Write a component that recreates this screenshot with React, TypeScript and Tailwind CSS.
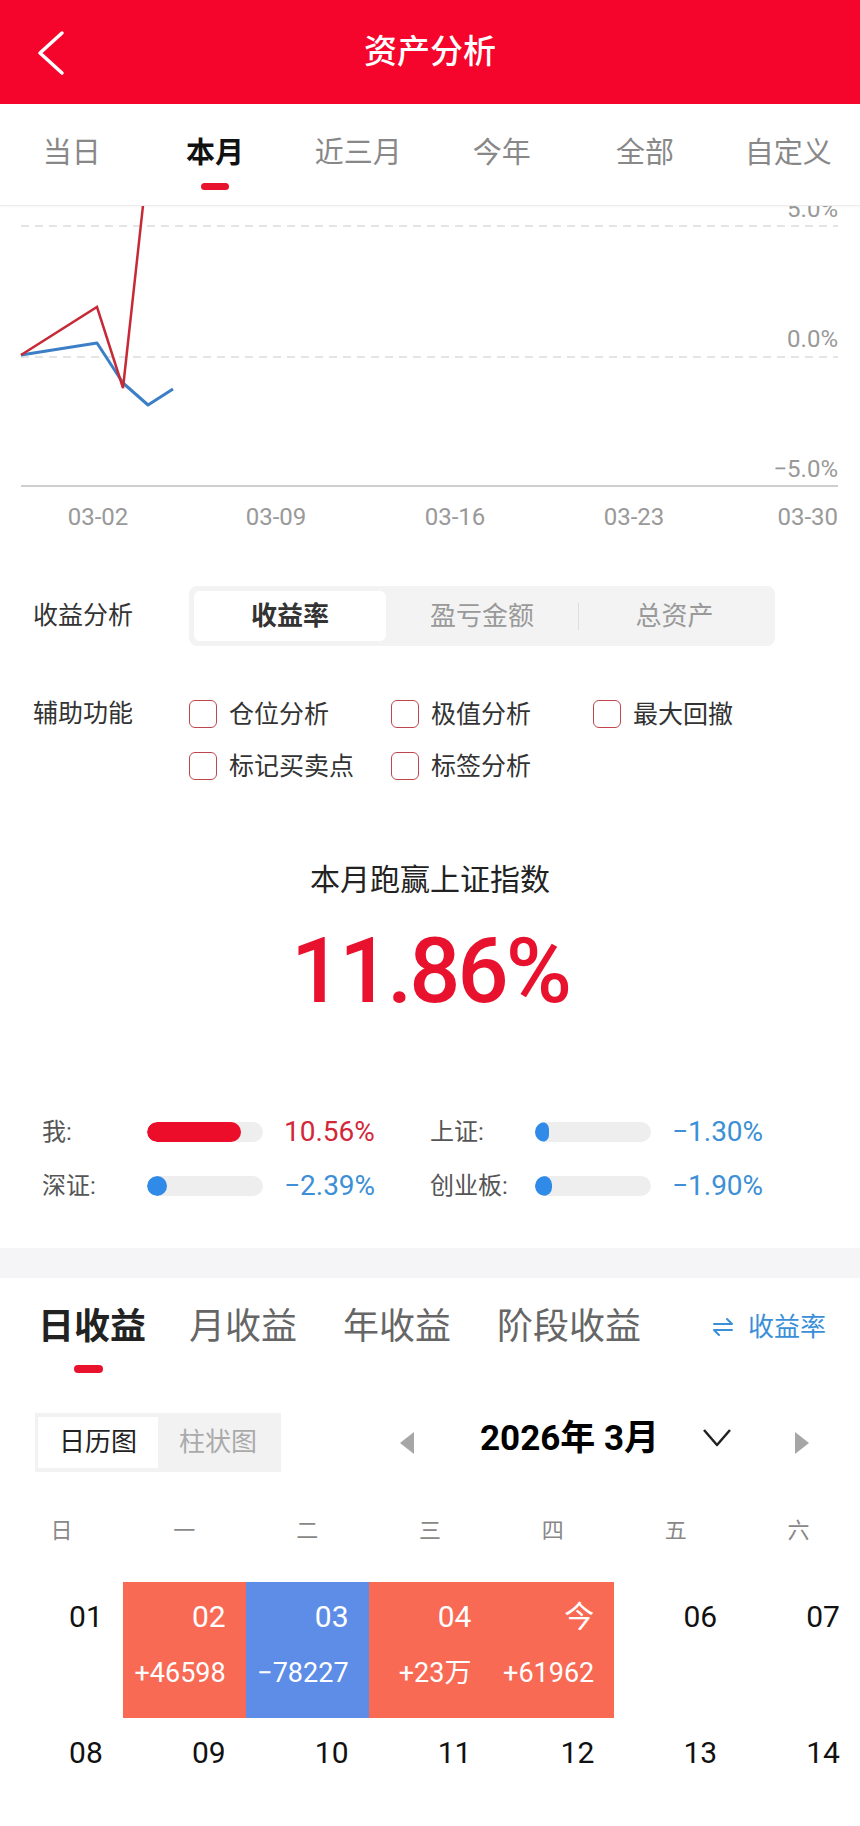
const tabs = ["当日", "本月", "近三月", "今年", "全部", "自定义"];
const weekdays = ["日", "一", "二", "三", "四", "五", "六"];

const Chart = () => {
  return (
    <svg width="860" height="334" viewBox="0 0 860 334" className="block overflow-hidden">
      <line x1="21" y1="20" x2="838" y2="20" stroke="#dcdcdc" strokeWidth="1.5" strokeDasharray="8 6" />
      <line x1="21" y1="151" x2="838" y2="151" stroke="#dcdcdc" strokeWidth="1.5" strokeDasharray="8 6" />
      <line x1="21" y1="280" x2="838" y2="280" stroke="#cfcfcf" strokeWidth="2" />
      <g fill="#999" fontSize="24" fontFamily="Roboto, sans-serif">
        <text x="838" y="11" textAnchor="end">5.0%</text>
        <text x="838" y="141" textAnchor="end">0.0%</text>
        <text x="838" y="271" textAnchor="end">−5.0%</text>
        <text x="98" y="319" textAnchor="middle">03-02</text>
        <text x="276" y="319" textAnchor="middle">03-09</text>
        <text x="455" y="319" textAnchor="middle">03-16</text>
        <text x="634" y="319" textAnchor="middle">03-23</text>
        <text x="838" y="319" textAnchor="end">03-30</text>
      </g>
      <polyline points="21,149 97,137 123,177 148,199 173,183" fill="none" stroke="#3d7fc6" strokeWidth="3" strokeLinejoin="round" />
      <polyline points="21,149 97,101 123,182 143.5,-5" fill="none" stroke="#c72a37" strokeWidth="2.5" strokeLinejoin="miter" />
    </svg>
  );
};

const Check = ({ label }: { label: string }) => {
  return (
    <div className="flex items-center w-[202px]">
      <div className="w-[28px] h-[28px] rounded-[6px] border-[1.5px] border-[#c0454c]" />
      <span className="ml-[12px] text-[25px] text-[#333] leading-none">{label}</span>
    </div>
  );
};

const Stat = ({ label, fill, value, color, barColor }: { label: string; fill: string; value: string; color: string; barColor: string }) => {
  return (
    <div className="flex items-center w-[388px] h-[36px]">
      <span className="w-[105px] text-[24px] text-[#555]">{label}</span>
      <div className="w-[116px] h-[20px] rounded-full bg-[#eeeeee] overflow-hidden">
        <div className={`h-full rounded-full ${fill} ${barColor}`} />
      </div>
      <span className={`ml-[21px] text-[28px] ${color}`}>{value}</span>
    </div>
  );
};

const Cell = ({ day, amount, bg }: { day: string; amount?: string; bg?: string }) => {
  return (
    <div className={`h-[136px] flex flex-col items-end pr-[20px] pt-[17px] ${bg ? bg + " text-white" : "text-[#111]"}`}>
      <span className="text-[30px] leading-[36px]">{day}</span>
      {amount && <span className="mt-[22px] text-[27px] leading-[32px]">{amount}</span>}
    </div>
  );
};

export default function App() {
  return (
    <div className="w-[860px] min-h-[1826px] bg-white overflow-hidden font-['Roboto','Noto_Sans_CJK_SC',sans-serif]">
      {/* header */}
      <div className="h-[104px] bg-[#f5052b] grid grid-cols-[100px_1fr_100px] items-center">
        <svg width="40" height="50" viewBox="0 0 40 50" className="ml-[28px]">
          <polyline points="34,6 12,26 34,46" fill="none" stroke="#fff" strokeWidth="3.5" strokeLinecap="round" strokeLinejoin="round" />
        </svg>
        <div className="text-center text-white text-[33px] font-medium">资产分析</div>
        <div />
      </div>

      {/* period tabs */}
      <div className="h-[102px] grid grid-cols-6 border-b border-[#ececec] shadow-[0_1px_3px_rgba(0,0,0,0.04)]">
        {tabs.map((t, i) => (
          <div key={t} className="flex flex-col items-center pt-[29px]">
            <span className={`text-[29px] leading-[40px] ${i === 1 ? "font-bold text-[#111]" : "text-[#888]"}`}>{t}</span>
            <div className={`mt-[10px] w-[28px] h-[7px] rounded-full ${i === 1 ? "bg-[#e8122d]" : "bg-transparent"}`} />
          </div>
        ))}
      </div>

      <Chart />

      {/* options */}
      <div className="pl-[33px] mt-[46px]">
        <div className="flex items-center">
          <span className="w-[156px] text-[25px] text-[#333]">收益分析</span>
          <div className="w-[586px] h-[60px] p-[5px] rounded-[8px] bg-[#f3f3f3] flex items-center">
            <div className="w-[192px] h-full rounded-[6px] bg-white flex items-center justify-center text-[26px] font-bold text-[#333]">收益率</div>
            <div className="w-[192px] h-full flex items-center justify-center text-[26px] text-[#999]">盈亏金额</div>
            <div className="w-[1px] h-[27px] bg-[#dddddd]" />
            <div className="w-[191px] h-full flex items-center justify-center text-[26px] text-[#999]">总资产</div>
          </div>
        </div>

        <div className="flex mt-[54px]">
          <span className="w-[156px] text-[25px] text-[#333] leading-[28px]">辅助功能</span>
          <div className="flex flex-col gap-[24px]">
            <div className="flex">
              <Check label="仓位分析" />
              <Check label="极值分析" />
              <Check label="最大回撤" />
            </div>
            <div className="flex">
              <Check label="标记买卖点" />
              <Check label="标签分析" />
            </div>
          </div>
        </div>
      </div>

      {/* summary */}
      <div className="mt-[80px] flex flex-col items-center">
        <span className="text-[30px] leading-[40px] text-[#222]">本月跑赢上证指数</span>
        <span className="mt-[27px] text-[90px] leading-[90px] font-medium text-[#e8122f] tracking-[-3px]">11.86%</span>
      </div>

      <div className="mt-[97px] px-[42px] flex flex-col gap-[18px]">
        <div className="flex">
          <Stat label="我:" fill="w-[94px]" barColor="bg-[#ec0d2a]" value="10.56%" color="text-[#d2283a]" />
          <Stat label="上证:" fill="w-[14px]" barColor="bg-[#2f8ae8]" value="−1.30%" color="text-[#3d8fd6]" />
        </div>
        <div className="flex">
          <Stat label="深证:" fill="w-[20px]" barColor="bg-[#2f8ae8]" value="−2.39%" color="text-[#3d8fd6]" />
          <Stat label="创业板:" fill="w-[17px]" barColor="bg-[#2f8ae8]" value="−1.90%" color="text-[#3d8fd6]" />
        </div>
      </div>

      <div className="mt-[44px] h-[30px] bg-[#f5f5f7]" />

      {/* income tabs */}
      <div className="pt-[27px] px-[38px] flex items-center h-[71px]">
        <span className="text-[36px] leading-[44px] font-bold text-[#222]">日收益</span>
        <span className="ml-[43px] text-[36px] leading-[44px] text-[#666]">月收益</span>
        <span className="ml-[46px] text-[36px] leading-[44px] text-[#666]">年收益</span>
        <span className="ml-[46px] text-[36px] leading-[44px] text-[#666]">阶段收益</span>
        <div className="ml-auto mr-[-4px] flex items-center text-[#3b8fd8]">
          <svg width="22" height="22" viewBox="0 0 22 22">
            <path d="M2 8 H20 L15 3 M20 14 H2 L7 19" fill="none" stroke="#3b8fd8" strokeWidth="2" strokeLinecap="round" strokeLinejoin="round" />
          </svg>
          <span className="ml-[14px] text-[26px]">收益率</span>
        </div>
      </div>
      <div className="ml-[74px] mt-[16px] w-[29px] h-[8px] rounded-full bg-[#e8122d]" />

      {/* calendar toolbar */}
      <div className="mt-[40px] flex items-center">
        <div className="ml-[35px] w-[246px] h-[59px] px-[3px] py-[4px] bg-[#f2f2f2] flex">
          <div className="w-[120px] h-full bg-white flex items-center justify-center text-[26px] text-[#222]">日历图</div>
          <div className="flex-1 flex items-center justify-center text-[26px] text-[#aaa]">柱状图</div>
        </div>
        <svg width="14" height="22" viewBox="0 0 14 22" className="ml-[119px]">
          <polygon points="14,0 0,11 14,22" fill="#a6a6a6" />
        </svg>
        <div className="w-[288px] pl-[66px] text-[35px] font-bold text-black leading-[40px] mt-[-8px]">2026年 3月</div>
        <svg width="30" height="20" viewBox="0 0 30 20" className="mt-[-10px]">
          <polyline points="2,2 15,17 28,2" fill="none" stroke="#222" strokeWidth="2.5" strokeLinejoin="round" />
        </svg>
        <svg width="14" height="22" viewBox="0 0 14 22" className="ml-[63px]">
          <polygon points="0,0 14,11 0,22" fill="#a6a6a6" />
        </svg>
      </div>

      {/* calendar */}
      <div className="mt-[42px] grid grid-cols-7 h-[30px] items-center">
        {weekdays.map((w) => (
          <span key={w} className="text-center text-[22px] text-[#888]">{w}</span>
        ))}
      </div>
      <div className="mt-[38px] grid grid-cols-7">
        <Cell day="01" />
        <Cell day="02" amount="+46598" bg="bg-[#f96a55]" />
        <Cell day="03" amount="−78227" bg="bg-[#5d8de6]" />
        <Cell day="04" amount="+23万" bg="bg-[#f96a55]" />
        <Cell day="今" amount="+61962" bg="bg-[#f96a55]" />
        <Cell day="06" />
        <Cell day="07" />
        <Cell day="08" />
        <Cell day="09" />
        <Cell day="10" />
        <Cell day="11" />
        <Cell day="12" />
        <Cell day="13" />
        <Cell day="14" />
      </div>
    </div>
  );
}
